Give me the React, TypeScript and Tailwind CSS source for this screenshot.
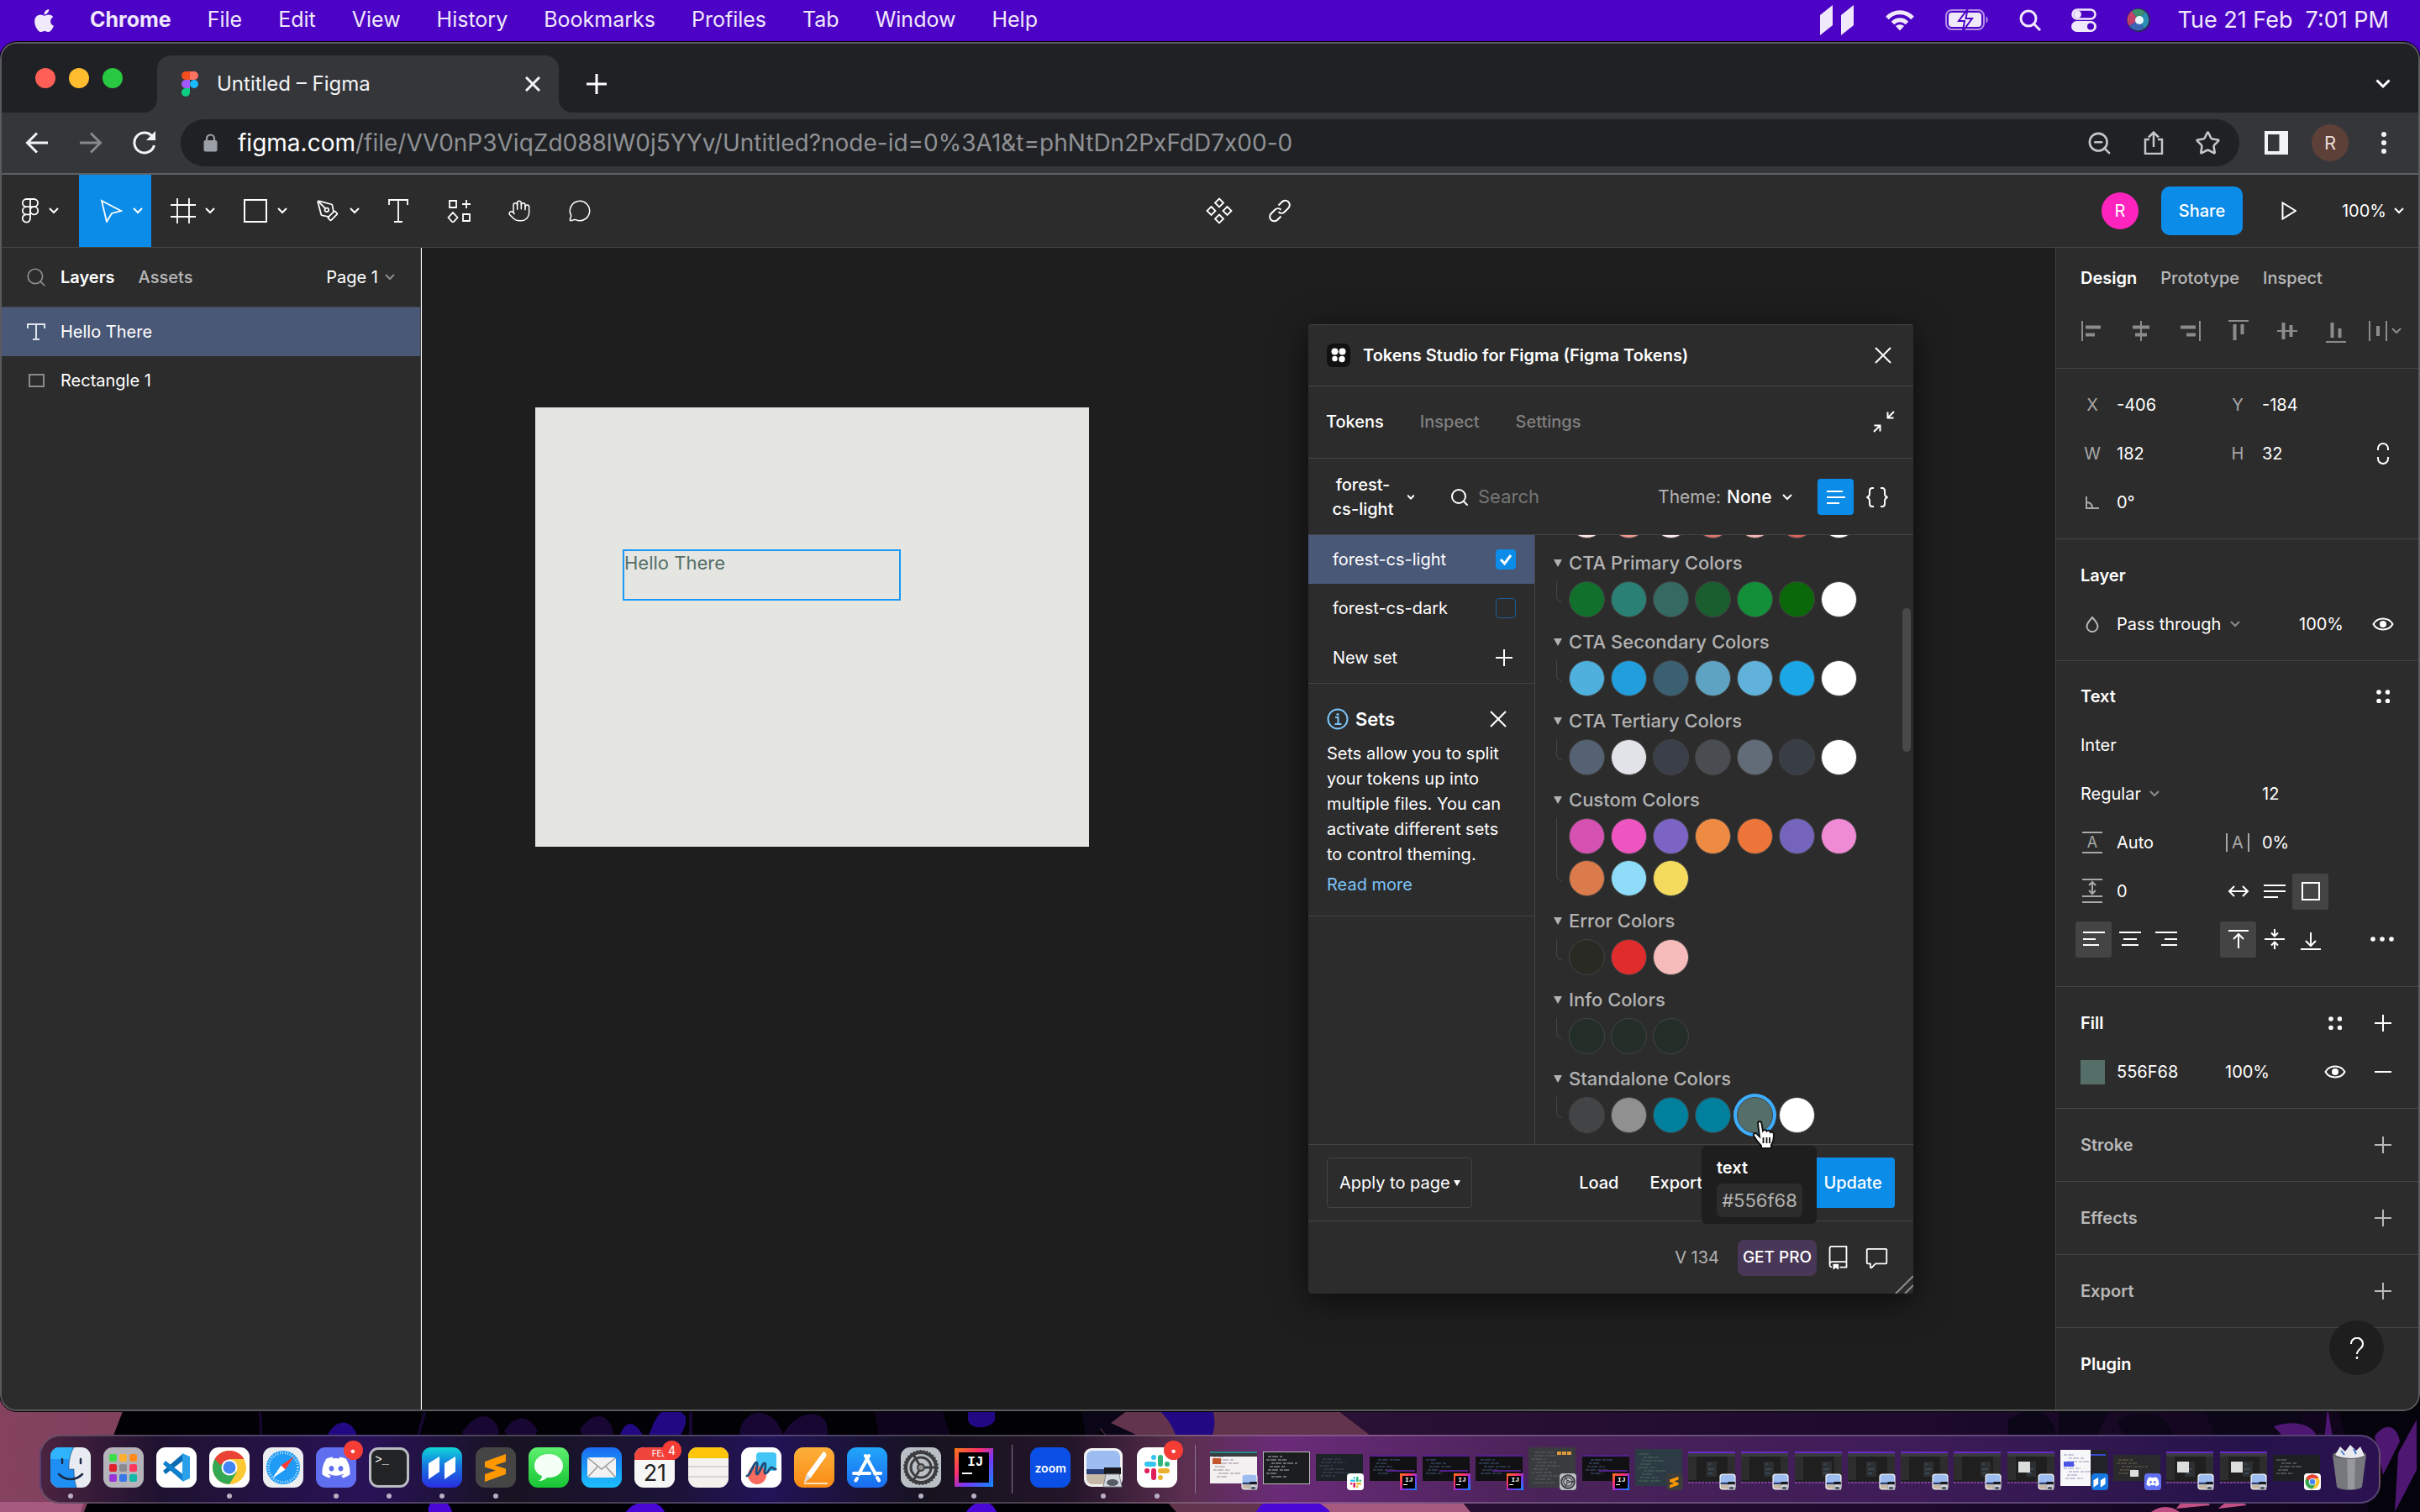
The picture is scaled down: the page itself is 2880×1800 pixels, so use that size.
import React from "react";
import { Hand, MessageCircle, PenTool, Search, Star, ZoomOut } from "lucide-react";
import { FaApple, FaDiscord } from "react-icons/fa";
import { GoComment, GoRepo } from "react-icons/go";

type Kids = { children?: React.ReactNode };

function Icon({ w = 28, h, sw = 2, className = "", children }: Kids & { w?: number; h?: number; sw?: number; className?: string }) {
  const hh = h ?? w;
  return (
    <svg width={w} height={hh} viewBox={`0 0 ${w} ${hh}`} fill="none" stroke="currentColor" strokeWidth={sw} className={`shrink-0 ${className}`} aria-hidden="true">
      {children}
    </svg>
  );
}

const Chevron = ({ className = "" }: { className?: string }) => (
  <Icon w={12} h={8} className={className}>
    <path d="M1 1l5 5 5-5" />
  </Icon>
);
const Plus = ({ className = "" }: { className?: string }) => (
  <Icon w={20} className={className}>
    <path d="M10 0v20M0 10h20" />
  </Icon>
);
const Cross = ({ w = 20, sw = 2 }: { w?: number; sw?: number }) => (
  <Icon w={w} sw={sw}>
    <path d={`M1 1L${w - 1} ${w - 1}M${w - 1} 1L1 ${w - 1}`} />
  </Icon>
);
const Eye = () => (
  <Icon w={26} h={16}>
    <path d="M1.500 8C4 3.500 8 1.500 13 1.500S22 3.500 24.500 8C22 12.500 18 14.500 13 14.500S4 12.500 1.500 8z" />
    <circle cx="13" cy="8" r="4" fill="currentColor" stroke="none" />
  </Icon>
);
const FourDots = () => (
  <Icon w={16}>
    <g fill="currentColor" stroke="none">
      <circle cx="3" cy="3" r="2.800" />
      <circle cx="13.500" cy="3" r="2.800" />
      <circle cx="3" cy="13.500" r="2.800" />
      <circle cx="13.500" cy="13.500" r="2.800" />
    </g>
  </Icon>
);

/* ---------- macOS menu bar ---------- */

const menus = ["File", "Edit", "View", "History", "Bookmarks", "Profiles", "Tab", "Window", "Help"];

function MenuBar() {
  return (
    <header className="flex h-12 items-center justify-between bg-[#4d03c5] pl-[37px] pr-[37px] text-[25px] text-[#f0e8fb]">
      <nav className="flex items-center gap-[43px]">
        <FaApple className="-mr-1 h-[31px] w-[31px]" aria-label="Apple" />
        <button className="font-bold">Chrome</button>
        {menus.map((m) => (
          <button key={m}>{m}</button>
        ))}
      </nav>
      <div className="flex items-center gap-9">
        <Icon w={42} h={38}>
          <path fill="currentColor" stroke="none" d="M1 13L16 1v24L1 37zM26 13L41 1v24L26 37z" />
        </Icon>
        <Icon w={36} h={26} sw={5}>
          <path d="M3 10.500C11 1.500 25 1.500 33 10.500" />
          <path d="M9.500 16.500c5-5 12-5 17 0" />
          <path d="M18 25.500l-5-5.500c3-2.500 7-2.500 10 0z" fill="currentColor" stroke="none" />
        </Icon>
        <Icon w={52} h={26}>
          <rect x="1" y="1" width="45" height="23" rx="7" opacity="0.6" />
          <rect x="4" y="4" width="39" height="17" rx="4" fill="currentColor" stroke="none" />
          <path d="M48.500 8.500c3 1 3 7 0 8z" fill="currentColor" stroke="none" opacity="0.6" />
          <path d="M26.500 0L16 14h7l-2 12 11-15h-7.500z" fill="currentColor" stroke="#4d03c5" strokeWidth="2" />
        </Icon>
        <Icon w={26} sw={3}>
          <circle cx="11" cy="11" r="9" />
          <path d="M17.500 17.500L25 25" />
        </Icon>
        <Icon w={30} h={28}>
          <rect x="1.500" y="1.500" width="27" height="11" rx="5.500" strokeWidth="2.500" />
          <circle cx="7.500" cy="7" r="3.500" fill="currentColor" />
          <rect x="0" y="15" width="30" height="13" rx="6.500" fill="currentColor" stroke="none" />
          <circle cx="23" cy="21.500" r="4" fill="#4d03c5" stroke="none" />
        </Icon>
        <svg width="28" height="28" viewBox="0 0 28 28" aria-hidden="true">
          <circle cx="14" cy="14" r="14" fill="#2b2a4e" />
          <path d="M14 14L6 3a13 13 0 00-3 18z" fill="#c2426c" />
          <path d="M14 14L6 3a13 13 0 0116 1z" fill="#3e8f70" />
          <path d="M14 14l8-10a13 13 0 01-1 20z" fill="#2b8fb4" />
          <path d="M14 14l7 10a13 13 0 01-18-3z" fill="#3a66b8" />
          <circle cx="15" cy="14" r="5" fill="#e6f6fb" />
        </svg>
        <time className="-ml-1 whitespace-pre text-[27px]">Tue 21 Feb  7:01 PM</time>
      </div>
    </header>
  );
}

/* ---------- Chrome ---------- */

function FigmaMark({ w = 20, h = 30 }: { w?: number; h?: number }) {
  return (
    <svg width={w} height={h} viewBox="0 0 20 30" aria-hidden="true">
      <path d="M5 0h5v10H5A5 5 0 015 0z" fill="#f24e1e" />
      <path d="M10 0h5a5 5 0 010 10h-5z" fill="#ff7262" />
      <path d="M5 10h5v10H5a5 5 0 010-10z" fill="#a259ff" />
      <circle cx="15" cy="15" r="5" fill="#1abcfe" />
      <path d="M5 20h5v5a5 5 0 11-5-5z" fill="#0acf83" />
    </svg>
  );
}

function TabStrip() {
  return (
    <div className="flex h-[82px] items-stretch bg-[#202124] pl-10">
      <div className="mr-[41px] flex items-center gap-4">
        <button aria-label="Close window" className="size-6 rounded-full bg-[#ff5f57]" />
        <button aria-label="Minimise window" className="size-6 rounded-full bg-[#febc2e]" />
        <button aria-label="Zoom window" className="size-6 rounded-full bg-[#28c840]" />
      </div>
      <div className="relative mt-[14px] flex w-[478px] items-center rounded-t-[16px] bg-[#35363a] pl-[29px] pr-[22px] text-[#f1f3f4]">
        <svg className="absolute -left-4 bottom-0" width="16" height="16" aria-hidden="true">
          <path d="M16 0v16H0A16 16 0 0016 0z" fill="#35363a" />
        </svg>
        <svg className="absolute -right-4 bottom-0" width="16" height="16" aria-hidden="true">
          <path d="M0 0v16h16A16 16 0 010 0z" fill="#35363a" />
        </svg>
        <FigmaMark />
        <span className="ml-[22px] flex-1 text-[24px]">Untitled – Figma</span>
        <button aria-label="Close tab">
          <Cross w={18} sw={3} />
        </button>
      </div>
      <button aria-label="New tab" className="ml-[33px] mt-[14px] text-white">
        <Icon w={24} sw={3}>
          <path d="M12 0v24M0 12h24" />
        </Icon>
      </button>
      <button aria-label="Search tabs" className="ml-auto mr-[33px] mt-[14px] text-white">
        <Icon w={18} h={12} sw={3}>
          <path d="M1.500 1.500L9 9l7.500-7.500" />
        </Icon>
      </button>
    </div>
  );
}

function AddressBar() {
  return (
    <div className="flex h-[74px] items-center border-b-2 border-[#5f6066] bg-[#35363a] pl-7 pr-[37px] text-[#f1f3f4]">
      <div className="mr-[29px] flex items-center gap-[36px]">
        <button aria-label="Back">
          <Icon sw={3}>
            <path d="M27 14H3M14 2.500L2.500 14 14 25.500" />
          </Icon>
        </button>
        <button aria-label="Forward" className="text-[#87888b]">
          <Icon sw={3}>
            <path d="M1 14h24M14 2.500L25.500 14 14 25.500" />
          </Icon>
        </button>
        <button aria-label="Reload">
          <Icon sw={3}>
            <path d="M24 7.500A12 12 0 1025.500 17" />
            <path d="M27 0v11H16z" fill="currentColor" stroke="none" />
          </Icon>
        </button>
      </div>
      <div className="flex h-14 min-w-0 flex-1 items-center rounded-full bg-[#202124] pl-[27px] pr-[22px]">
        <Icon w={17} h={22} className="text-[#9aa0a6]">
          <path d="M4 9V6a4.500 4.500 0 019 0v3" strokeWidth="2.200" />
          <rect x="0.500" y="8" width="16" height="13.500" rx="2" fill="currentColor" stroke="none" />
        </Icon>
        <p className="ml-[24px] min-w-0 flex-1 truncate text-[28px] text-[#8f9195] [font-feature-settings:'calt'_0]">
          <span className="text-white">figma.com</span>/file/VV0nP3ViqZd088lW0j5YYv/Untitled?node-id=0%3A1&amp;t=phNtDn2PxFdD7x00-0
        </p>
        <div className="flex items-center gap-[35px] text-[#c4c7ca]">
          <button aria-label="Zoom">
            <ZoomOut size={31} strokeWidth={2} />
          </button>
          <button aria-label="Share this page">
            <Icon sw={2.500}>
              <path d="M9 10H4v17h20V10h-5M14 19V2M8 7.500l6-6 6 6" />
            </Icon>
          </button>
          <button aria-label="Bookmark this tab">
            <Star size={31} strokeWidth={2} />
          </button>
        </div>
      </div>
      <div className="ml-[30px] flex items-center">
        <button aria-label="Side panel">
          <Icon w={28} sw={4}>
            <rect x="2" y="2" width="24" height="24" />
            <path d="M21 2v24" strokeWidth="7" />
          </Icon>
        </button>
        <button className="ml-7 size-11 rounded-full bg-[#5d4037] text-[22px] text-[#e8dcd8]">R</button>
        <button aria-label="Chrome menu" className="ml-[38px]">
          <Icon w={8} h={28}>
            <g fill="currentColor" stroke="none">
              <circle cx="4" cy="4" r="3" />
              <circle cx="4" cy="14" r="3" />
              <circle cx="4" cy="24" r="3" />
            </g>
          </Icon>
        </button>
      </div>
    </div>
  );
}

/* ---------- Figma toolbar ---------- */

function Tool({ label, active, menu, tight, children }: Kids & { label: string; active?: boolean; menu?: boolean; tight?: boolean }) {
  return (
    <button
      aria-label={label}
      className={`flex h-[86px] items-center ${menu ? "w-[86px] pl-6" : "w-[72px] justify-center"} ${tight ? "gap-1" : "gap-3"} ${active ? "bg-[#0c8ce9]" : ""}`}
    >
      <span className="flex w-7 justify-center">{children}</span>
      {menu && <Chevron />}
    </button>
  );
}

function FigmaToolbar() {
  return (
    <div className="grid grid-cols-[1fr_auto_1fr] border-b border-[#444444] bg-[#2c2c2c] text-white">
      <div className="flex">
        <div className="pr-[6px]">
          <Tool label="Main menu" menu tight>
            <Icon w={20} h={30} className="-ml-2">
              <path
                d="M10 1h4.500a4.600 4.600 0 010 9.200H10zM10 1H5.500a4.600 4.600 0 000 9.200H10zM10 10.200H5.500a4.600 4.600 0 000 9.200H10zM10 19.400H5.500a4.600 4.600 0 104.500 4.600z"
                strokeWidth="1.800"
              />
              <circle cx="14.600" cy="14.800" r="4.600" strokeWidth="1.800" />
            </Icon>
          </Tool>
        </div>
        <Tool label="Move" menu active>
          <Icon sw={1.800}>
            <path d="M3 2l23 12-11 3-6 10z" />
          </Icon>
        </Tool>
        <Tool label="Frame" menu>
          <Icon w={30} sw={1.800}>
            <path d="M8 0v30M22 0v30M0 8h30M0 22h30" />
          </Icon>
        </Tool>
        <Tool label="Rectangle" menu>
          <Icon w={28}>
            <rect x="1" y="1" width="26" height="26" />
          </Icon>
        </Tool>
        <Tool label="Pen" menu>
          <PenTool size={30} strokeWidth={1.500} />
        </Tool>
        <Tool label="Text">
          <Icon w={26} h={28} sw={1.800}>
            <path d="M2 7V1h22v6M13 1v26M8 27h10" />
          </Icon>
        </Tool>
        <Tool label="Resources">
          <Icon w={28} sw={1.800}>
            <path d="M3 2h8v8H3zM19 18h8v8h-8zM23 1v10M18 6h10M7 16l5.500 6L7 28l-5.500-6z" />
          </Icon>
        </Tool>
        <Tool label="Hand">
          <Hand size={36} strokeWidth={1.300} />
        </Tool>
        <Tool label="Comment">
          <MessageCircle size={34} strokeWidth={1.300} />
        </Tool>
      </div>
      <div className="flex pl-[94px]">
        <Tool label="Create component">
          <Icon w={32} sw={1.800}>
            <path d="M16 1.500l5 5-5 5-5-5zM16 20.500l5 5-5 5-5-5zM6.500 11l5 5-5 5-5-5zM25.500 11l5 5-5 5-5-5z" />
          </Icon>
        </Tool>
        <Tool label="Create link">
          <Icon w={28} sw={2}>
            <path d="M12.500 7.500l4-4a5 5 0 018 7l-5 5a5 5 0 01-7-.3" />
            <path d="M15.500 20.500l-4 4a5 5 0 01-8-7l5-5a5 5 0 017 .3" />
          </Icon>
        </Tool>
      </div>
      <div className="flex items-center justify-end pr-[17px] text-[20px]">
        <button className="size-11 rounded-full bg-[#ff24bd]">R</button>
        <button className="ml-[27px] h-[58px] w-[97px] rounded-[10px] bg-[#0c8ce9] font-medium">Share</button>
        <button aria-label="Present" className="ml-[46px]">
          <Icon w={18} h={22}>
            <path d="M1.500 1.500v19L17 11z" />
          </Icon>
        </button>
        <button className="ml-[54px] flex items-center gap-[9px]">
          100% <Chevron />
        </button>
      </div>
    </div>
  );
}

/* ---------- Left panel ---------- */

function LayersPanel() {
  return (
    <aside className="w-[499px] shrink-0 border-r border-[#444444] bg-[#2c2c2c] text-[20px] text-white">
      <div className="flex h-[71px] items-center border-b border-[#444444] pl-[28px] pr-[30px]">
        <Search size={26} strokeWidth={1.600} className="text-[#8c8c8c]" />
        <button className="ml-4 font-semibold">Layers</button>
        <button className="ml-7 font-medium text-[#b8b8b8]">Assets</button>
        <button className="ml-auto flex items-center gap-2">
          Page 1 <Chevron className="text-[#8c8c8c]" />
        </button>
      </div>
      <ul>
        <li className="flex h-[58px] items-center bg-[#4a5878] pl-[30px]">
          <Icon w={22} h={20} className="text-[#dfe3ec]">
            <path d="M1 6V1h20v5M11 1v18M7 19h8" />
          </Icon>
          <span className="ml-[18px]">Hello There</span>
        </li>
        <li className="flex h-[58px] items-center pl-[30px]">
          <Icon w={22} h={16} className="text-[#8c8c8c]">
            <rect x="3" y="1" width="17" height="14" />
          </Icon>
          <span className="ml-[18px]">Rectangle 1</span>
        </li>
      </ul>
    </aside>
  );
}

/* ---------- Tokens plugin ---------- */

const groups: { name: string; colors: string[] }[] = [
  { name: "CTA Primary Colors", colors: ["#11702b", "#2a8074", "#356a62", "#1a5d2e", "#138f3a", "#0a680a", "#ffffff"] },
  { name: "CTA Secondary Colors", colors: ["#4fb0de", "#219edb", "#3b6072", "#5fa3c3", "#60b2db", "#1ba6e6", "#ffffff"] },
  { name: "CTA Tertiary Colors", colors: ["#556274", "#e2e3e8", "#3b3f49", "#494c51", "#626c79", "#383d46", "#ffffff"] },
  { name: "Custom Colors", colors: ["#d552b2", "#ee55c1", "#7c64c5", "#ee8b43", "#ee7539", "#7564bb", "#ef8ad5", "#db7a4a", "#8edcf9", "#f4db5e"] },
  { name: "Error Colors", colors: ["#292a23", "#e02c2d", "#f5bcbb"] },
  { name: "Info Colors", colors: ["#242e29", "#242e29", "#242e29"] },
  { name: "Standalone Colors", colors: ["#434446", "#909090", "#00809d", "#00809d", "#556f68", "#ffffff"] },
];
const hidden = ["#fde3e1", "#ee9891", "#feeceb", "#d97670", "#f4b7b3", "#d6625e", "#ffffff"];

function Swatch({ color, selected }: { color: string; selected?: boolean }) {
  return (
    <button
      aria-label={color}
      className={`size-[43px] shrink-0 rounded-full border border-[#444444] ${selected ? "ring-4 ring-[#3daeff]" : ""}`}
      style={{ backgroundColor: color }}
    />
  );
}

function TokenGroups() {
  return (
    <div className="relative min-w-0 flex-1 overflow-hidden pl-[22px]">
      <div className="flex h-[4px] items-end gap-[7px] overflow-hidden pl-[18px]">
        {hidden.map((c) => (
          <Swatch key={c} color={c} />
        ))}
      </div>
      {groups.map((g) => (
        <section key={g.name} className="pt-[17px]">
          <h3 className="flex h-6 items-center gap-2 text-[22px] font-medium text-[#b3b3b3]">
            <svg width="10" height="9" aria-hidden="true">
              <path d="M0 0h10L5 9z" fill="currentColor" />
            </svg>
            {g.name}
          </h3>
          <div className="mt-[10px] flex pl-[3px]">
            <span className="mb-[18px] mr-2 w-[7px] rounded-bl-[7px] border-b border-l border-[#444444]" />
            <div className="flex w-[343px] flex-wrap gap-[7px]">
              {g.colors.map((c, i) => (
                <Swatch key={i} color={c} selected={c === "#556f68"} />
              ))}
            </div>
          </div>
        </section>
      ))}
      <div className="absolute right-[3px] top-[87px] h-[171px] w-[10px] rounded-full bg-[#494949]" />
    </div>
  );
}

function TokenSets() {
  return (
    <div className="w-[270px] shrink-0 border-r border-[#444444] text-[20px] text-white">
      <label className="flex h-[58px] items-center justify-between bg-[#4a5878] pl-[29px] pr-[22px]">
        forest-cs-light
        <span className="relative flex">
          <input type="checkbox" defaultChecked className="size-6 appearance-none rounded-[4px] bg-[#0c8ce9]" />
          <Icon w={24} sw={3} className="pointer-events-none absolute inset-0">
            <path d="M6 12l4.500 5L18 7" />
          </Icon>
        </span>
      </label>
      <label className="flex h-[58px] items-center justify-between pl-[29px] pr-[22px]">
        forest-cs-dark
        <input type="checkbox" className="size-6 appearance-none rounded-[4px] border border-[#1f5d94]" />
      </label>
      <button className="flex h-[61px] w-full items-center justify-between border-b border-[#444444] pl-[29px] pr-[26px]">
        New set
        <Plus />
      </button>
      <div className="border-b border-[#444444] px-[22px] pb-[22px] pt-[28px]">
        <div className="flex items-center">
          <Icon w={26} className="text-[#7cc4f8]">
            <circle cx="13" cy="13" r="11.500" />
            <path d="M10 11h3.500v8M9.500 19h8" />
            <circle cx="13" cy="7.500" r="1.600" fill="currentColor" stroke="none" />
          </Icon>
          <h3 className="ml-2 text-[22px] font-semibold leading-7">Sets</h3>
          <button aria-label="Dismiss" className="ml-auto mr-[11px]">
            <Cross />
          </button>
        </div>
        <p className="mt-3 leading-[30px]">Sets allow you to split your tokens up into multiple files. You can activate different sets to control theming.</p>
        <a href="#sets" className="mt-[6px] block leading-[30px] text-[#7cc4f8]">
          Read more
        </a>
      </div>
    </div>
  );
}

function TokensPlugin() {
  return (
    <section className="absolute left-[1055px] top-[91px] flex h-[1154px] w-[720px] flex-col rounded-[4px] border-t border-[#444444] bg-[#2c2c2c] text-[20px] text-white shadow-[0_8px_40px_rgba(0,0,0,0.6)]">
      <header className="flex h-[73px] items-center border-b border-[#444444] px-[22px]">
        <span className="flex size-7 items-center justify-center rounded-[7px] bg-[#111111]">
          <Icon w={18}>
            <g fill="currentColor" stroke="none">
              <circle cx="4.500" cy="4.500" r="4" />
              <circle cx="13.500" cy="4.500" r="4" />
              <circle cx="4.500" cy="13" r="3.200" />
              <circle cx="13" cy="13.500" r="3.700" />
            </g>
          </Icon>
        </span>
        <h2 className="ml-[15px] flex-1 font-semibold">Tokens Studio for Figma (Figma Tokens)</h2>
        <button aria-label="Close plugin" className="mr-1">
          <Cross />
        </button>
      </header>
      <nav className="flex h-[86px] items-center gap-[43px] border-b border-[#444444] pb-[2px] pl-[21px] pr-[22px] font-medium">
        <button>Tokens</button>
        <button className="text-[#808080]">Inspect</button>
        <button className="text-[#808080]">Settings</button>
        <button aria-label="Collapse" className="ml-auto">
          <Icon w={26}>
            <path d="M25 1l-7 7M17.500 1.500V8.500h7M1 25l7-7M8.500 24.500V17.500h-7" />
          </Icon>
        </button>
      </nav>
      <div className="flex h-[91px] items-center border-b border-[#444444] pl-7 pr-[29px] pt-px">
        <button aria-haspopup="menu" className="flex items-center gap-[16px] font-medium leading-[29px]">
          <span className="w-[74px]">forest-cs-light</span>
          <Icon w={8} h={6}>
            <path d="M0 .500l4 4 4-4" />
          </Icon>
        </button>
        <label className="ml-[42px] flex items-center gap-[10px]">
          <Search size={24} strokeWidth={2} />
          <input aria-label="Search" placeholder="Search" className="w-[190px] bg-transparent text-[22px] outline-none placeholder:text-[#757575]" />
        </label>
        <label className="ml-auto flex items-center text-[21px] text-[#b3b3b3]">
          Theme:
          <select className="ml-[7px] appearance-none bg-transparent font-medium text-white">
            <option>None</option>
          </select>
          <Chevron className="ml-3 text-white" />
        </label>
        <button aria-label="List view" className="ml-[30px] flex size-[43px] items-center justify-center rounded-[4px] bg-[#0c8ce9]">
          <Icon w={24} h={18}>
            <path d="M1 2h19M1 9h22M1 16h15" />
          </Icon>
        </button>
        <button aria-label="JSON view" className="ml-[14px]">
          <Icon w={28} h={26}>
            <path d="M10 2H8C5.500 2 5 3.500 5 5.500v3C5 11 4 12.500 1.500 13 4 13.500 5 15 5 17.500v3c0 2 .5 3.500 3 3.500h2M18 2h2c2.500 0 3 1.500 3 3.500v3c0 2.500 1 4 3.500 4.500-2.500.5-3.500 2-3.500 4.500v3c0 2-.5 3.500-3 3.500h-2" />
          </Icon>
        </button>
      </div>
      <div className="flex min-h-0 flex-1">
        <TokenSets />
        <TokenGroups />
      </div>
      <div className="relative flex h-[92px] items-center border-y border-[#444444] px-[22px]">
        <button aria-haspopup="menu" className="flex h-[60px] w-[173px] items-center gap-1 rounded-[4px] border border-[#444444] pl-[14px]">
          Apply to page
          <svg width="8" height="7" aria-hidden="true">
            <path d="M0 0h8L4 7z" fill="currentColor" />
          </svg>
        </button>
        <button className="ml-auto mr-[37px] font-medium">Load</button>
        <button className="mr-[129px] font-medium">Export</button>
        <button className="h-[60px] w-[100px] rounded-[4px] bg-[#0c8ce9] font-medium">Update</button>
        <div role="tooltip" className="absolute right-[115px] top-px w-[137px] rounded-[6px] bg-[#1e1e1e] pb-2 pl-[18px] pt-3">
          <p className="font-semibold leading-7">text</p>
          <code className="mt-[5px] block w-[102px] rounded-[6px] bg-[#2c2c2c] text-center font-[Inter] text-[22px] leading-10 text-[#b3b3b3]">#556f68</code>
        </div>
        <svg className="absolute -top-[30px] right-[163px]" width="30" height="36" viewBox="0 0 30 36" aria-hidden="true">
          <path
            d="M8 4.500C8 1 12 1 12.500 4.500L14 13c1-1.500 4-1.500 4.500.5 1.500-1.500 4-.5 4.500 1.500 2-1 4 0 4 3 0 6-1 9-3 12v4H12v-3C8 27 5 23 3 19c-1-3 2.500-4 4.500-1.500L10 20z"
            fill="#fff"
            stroke="#111"
            strokeWidth="2"
          />
          <path d="M14.500 21v7M18.500 21v7M22 21v7" stroke="#111" strokeWidth="1.800" />
        </svg>
      </div>
      <footer className="relative flex h-[86px] items-center justify-end pr-[29px]">
        <span className="text-[#b3b3b3]">V 134</span>
        <button className="ml-[22px] h-[43px] w-[94px] rounded-[8px] bg-[#483757] text-[19px] font-medium">GET PRO</button>
        <a href="#docs" aria-label="Documentation" className="ml-[11px]">
          <GoRepo size={29} />
        </a>
        <a href="#feedback" aria-label="Feedback" className="ml-[17px]">
          <GoComment size={29} />
        </a>
        <Icon w={22} className="absolute bottom-0 right-0 text-[#8c8c8c]">
          <path d="M1 22L22 1M12 22l10-10" />
        </Icon>
      </footer>
    </section>
  );
}

/* ---------- Canvas ---------- */

function Canvas() {
  return (
    <main className="relative min-w-0 flex-1 border-l border-white bg-[#1e1e1e]">
      <div className="absolute left-[135px] top-[190px] h-[523px] w-[659px] bg-[#e5e6e1]">
        <div className="absolute left-[104px] top-[169px] h-[61px] w-[331px] border-2 border-[#1a98f5] text-[22px] leading-7 text-[#556f68]">Hello There</div>
      </div>
      <TokensPlugin />
    </main>
  );
}

/* ---------- Right panel ---------- */

const Section = ({ children }: Kids) => <section className="border-b border-[#444444] py-[14px]">{children}</section>;
const Row = ({ children }: Kids) => <div className="flex h-[58px] items-center pl-[29px] pr-[29px]">{children}</div>;

function Field({ id, value, label, name, wide }: { id: string; value: string; label: React.ReactNode; name?: string; wide?: boolean }) {
  return (
    <div className={`flex items-center ${wide ? "w-[173px]" : "w-[130px]"}`}>
      <label htmlFor={id} aria-label={name} className="flex w-[28px] justify-center text-[#a8a8a8]">
        {label}
      </label>
      <input id={id} defaultValue={value} className="ml-[15px] w-[85px] bg-transparent outline-none" />
    </div>
  );
}

function Closed({ title }: { title: string }) {
  return (
    <Section>
      <Row>
        <h3 className="flex-1 font-semibold text-[#b8b8b8]">{title}</h3>
        <button aria-label={`Add ${title.toLowerCase()}`} className="mr-[3px] text-[#b8b8b8]">
          <Plus />
        </button>
      </Row>
    </Section>
  );
}

function Toggle({ label, on, children }: Kids & { label: string; on?: boolean }) {
  return (
    <button aria-label={label} className={`flex size-[43px] items-center justify-center rounded-[3px] ${on ? "bg-[#444444]" : ""}`}>
      {children}
    </button>
  );
}

function DesignPanel() {
  return (
    <aside className="relative w-[432px] shrink-0 border-l border-[#444444] bg-[#2c2c2c] text-[20px] text-white">
      <nav className="flex h-[71px] items-center gap-7 pl-[29px]">
        <button className="font-semibold">Design</button>
        <button className="font-medium text-[#b8b8b8]">Prototype</button>
        <button className="font-medium text-[#b8b8b8]">Inspect</button>
      </nav>
      <div className="flex h-[73px] items-center border-b border-[#444444] pb-4 pl-[14px] text-[#8c8c8c]">
        {[
          ["Align left", "M2 2v24", "M6 9.500h18M6 18.500h11"],
          ["Align horizontal centers", "M14 2v24", "M4 9.500h20M7 18.500h14"],
          ["Align right", "M26 2v24", "M3 9.500h18M10 18.500h11"],
          ["Align top", "M2 2h24", "M9.500 6v19M18.500 6v12"],
          ["Align vertical centers", "M2 14h24", "M9.500 4v20M18.500 7v14"],
          ["Align bottom", "M2 27h24", "M9.500 4v18M18.500 11v11"],
        ].map(([name, thin, thick]) => (
          <button key={name} aria-label={name} className="flex w-[58px] justify-center">
            <Icon>
              <path d={thin} strokeWidth="2" />
              <path d={thick} strokeWidth="4" />
            </Icon>
          </button>
        ))}
        <button aria-label="Distribute" className="ml-[9px] flex items-center gap-1">
          <Icon w={24} h={26}>
            <path d="M2 1v24M22 1v24" />
            <path d="M12 7v12" strokeWidth="4" />
          </Icon>
          <Chevron />
        </button>
      </div>
      <Section>
        <Row>
          <Field id="x" label="X" value="-406" wide />
          <Field id="y" label="Y" value="-184" />
        </Row>
        <Row>
          <Field id="w" label="W" value="182" wide />
          <Field id="h" label="H" value="32" />
          <button aria-label="Constrain proportions" className="ml-auto mr-[6px]">
            <Icon w={14} h={26}>
              <path d="M1 9V7a6 6 0 0112 0v2M1 17v2a6 6 0 0012 0v-2" />
            </Icon>
          </button>
        </Row>
        <Row>
          <Field
            id="angle"
            name="Rotation"
            value="0°"
            label={
              <Icon w={16}>
                <path d="M1 1v14h15M1 8c5 0 7 3 7 7" />
              </Icon>
            }
          />
        </Row>
      </Section>
      <Section>
        <Row>
          <h3 className="font-semibold">Layer</h3>
        </Row>
        <Row>
          <span className="flex w-7 justify-center text-[#b8b8b8]">
            <Icon w={16} h={20}>
              <path d="M8 2C4 6.500 1.500 9 1.500 12.500a6.500 6.500 0 0013 0C14.500 9 12 6.500 8 2z" />
            </Icon>
          </span>
          <select aria-label="Blend mode" className="ml-[15px] appearance-none bg-transparent">
            <option>Pass through</option>
          </select>
          <Chevron className="ml-[10px] text-[#8c8c8c]" />
          <input aria-label="Layer opacity" defaultValue="100%" className="ml-auto mr-[25px] w-[62px] bg-transparent outline-none" />
          <button aria-label="Toggle visibility">
            <Eye />
          </button>
        </Row>
      </Section>
      <section className="border-b border-[#444444] pb-[28px] pt-[13px]">
        <Row>
          <h3 className="flex-1 font-semibold">Text</h3>
          <button aria-label="Text styles" className="mr-[5px]">
            <FourDots />
          </button>
        </Row>
        <Row>
          <input aria-label="Font family" defaultValue="Inter" className="w-full bg-transparent outline-none" />
        </Row>
        <Row>
          <div className="flex w-[216px] items-center">
            <select aria-label="Font style" className="appearance-none bg-transparent">
              <option>Regular</option>
            </select>
            <Chevron className="ml-[10px] text-[#8c8c8c]" />
          </div>
          <input aria-label="Font size" defaultValue="12" className="w-20 bg-transparent outline-none" />
        </Row>
        <Row>
          <Field id="lh" name="Line height" value="Auto" wide label={<span className="w-6 border-y-2 border-[#a8a8a8] text-center text-[18px] leading-[22px]">A</span>} />
          <Field id="ls" name="Letter spacing" value="0%" label={<span className="w-[28px] shrink-0 border-x-2 border-[#a8a8a8] text-center text-[20px] leading-[22px]">A</span>} />
        </Row>
        <Row>
          <Field
            id="ps"
            name="Paragraph spacing"
            value="0"
            label={
              <Icon w={24} h={30}>
                <path d="M0 1h24M0 21h24M0 28h24M12 5v12M8 8l4-4 4 4M8 14l4 4 4-4" />
              </Icon>
            }
          />
          <div className="ml-[36px] flex">
            <Toggle label="Auto width">
              <Icon w={26} h={14}>
                <path d="M2 7h22M8 1L2 7l6 6M18 1l6 6-6 6" />
              </Icon>
            </Toggle>
            <Toggle label="Auto height">
              <Icon w={26} h={18}>
                <path d="M0 2h26M0 9h26M0 16h17" />
              </Icon>
            </Toggle>
            <Toggle label="Fixed size" on>
              <Icon w={22}>
                <rect x="1" y="1" width="20" height="20" />
              </Icon>
            </Toggle>
          </div>
        </Row>
        <div className="flex h-[56px] items-center pl-[23px] pr-[29px]">
          <Toggle label="Align text left" on>
            <Icon w={26} h={18}>
              <path d="M0 1h26M0 9h15M0 16h19" />
            </Icon>
          </Toggle>
          <Toggle label="Align text center">
            <Icon w={26} h={18}>
              <path d="M0 1h26M5 9h16M3 16h20" />
            </Icon>
          </Toggle>
          <Toggle label="Align text right">
            <Icon w={26} h={18}>
              <path d="M0 1h26M11 9h15M7 16h19" />
            </Icon>
          </Toggle>
          <div className="ml-[43px] flex">
            <Toggle label="Align text top" on>
              <Icon w={26}>
                <path d="M1 3h24M13 24V8M7 13l6-6 6 6" />
              </Icon>
            </Toggle>
            <Toggle label="Align text middle">
              <Icon w={26}>
                <path d="M1 13h24M13 1v8M9 5.500l4 4 4-4M13 25v-8M9 20.500l4-4 4 4" />
              </Icon>
            </Toggle>
            <Toggle label="Align text bottom">
              <Icon w={26}>
                <path d="M1 25h24M13 5v15M7 15l6 6 6-6" />
              </Icon>
            </Toggle>
          </div>
          <button aria-label="Type settings" className="ml-auto">
            <Icon w={28} h={6}>
              <g fill="currentColor" stroke="none">
                <circle cx="3" cy="3" r="2.800" />
                <circle cx="14" cy="3" r="2.800" />
                <circle cx="25" cy="3" r="2.800" />
              </g>
            </Icon>
          </button>
        </div>
      </section>
      <Section>
        <Row>
          <h3 className="flex-1 font-semibold">Fill</h3>
          <button aria-label="Fill styles" className="mr-[39px]">
            <FourDots />
          </button>
          <button aria-label="Add fill" className="mr-[3px]">
            <Plus />
          </button>
        </Row>
        <Row>
          <button aria-label="Fill colour" className="size-[29px] bg-[#556f68]" />
          <input aria-label="Fill hex" defaultValue="556F68" className="ml-[14px] w-[129px] bg-transparent outline-none" />
          <input aria-label="Fill opacity" defaultValue="100%" className="w-[70px] bg-transparent outline-none" />
          <button aria-label="Toggle fill" className="ml-auto mr-[34px]">
            <Eye />
          </button>
          <button aria-label="Remove fill" className="mr-[3px]">
            <Icon w={20}>
              <path d="M0 10h20" />
            </Icon>
          </button>
        </Row>
      </Section>
      <Closed title="Stroke" />
      <Closed title="Effects" />
      <Closed title="Export" />
      <div className="pt-[14px]">
        <Row>
          <h3 className="font-semibold">Plugin</h3>
        </Row>
      </div>
      <button aria-label="Help" className="absolute bottom-[41px] right-[41px] flex size-[65px] items-center justify-center rounded-full bg-[#1e1e1e]">
        <Icon w={18} h={26}>
          <path d="M2 8a7 7 0 1111 5.500C10 16 9 17 9 20" />
          <circle cx="9" cy="24.500" r="1.400" fill="currentColor" stroke="none" />
        </Icon>
      </button>
    </aside>
  );
}

/* ---------- Desktop and dock ---------- */

function Wallpaper() {
  return (
    <svg className="absolute inset-x-0 bottom-0 h-[220px] w-full" viewBox="0 0 2880 220" preserveAspectRatio="none" aria-hidden="true">
      <defs>
        <linearGradient id="dusk" x1="0" x2="1">
          <stop offset="0" stopColor="#84425f" />
          <stop offset="0.540" stopColor="#5c2f48" />
          <stop offset="0.550" stopColor="#2a1136" />
          <stop offset="0.800" stopColor="#1d0a2c" />
          <stop offset="1" stopColor="#0d0418" />
        </linearGradient>
      </defs>
      <rect width="2880" height="220" fill="url(#dusk)" />
      <path d="M150 90L100 220H1420L1330 130 1270 90z" fill="#020106" />
      <path d="M1280 90h300l60 46 80 84H1400z" fill="#62354c" />
      <path d="M0 208h100l-4 12H0zM1510 208h230l10 12H1500z" fill="#a65a80" />
      <g fill="#230884">
        <path d="M390 128c10-20 30-20 36 4l6 18h-30zM432 150c4-16 16-24 24-20-2 16-10 24-24 20zM738 128c10-26 24-8 32 10 8-34 24-56 46-32 2 24-20 38-46 50z" />
        <path d="M1152 95h32v16c-6 10-28 12-32 0zM1376 95h66c6 16 4 32-6 48l-34 6c0-24-10-38-26-54z" />
        <path d="M510 220c-4-16 24-20 28 0zM745 220c10-16 40-16 46 0zM1150 220c10-16 30-16 36 0zM1495 220c10-24 70-24 88 0z" fill="#4a08d6" />
      </g>
      <g fill="#190733">
        <path d="M550 125c20-30 40-20 44 0-14 24-34 24-44 0zM600 124c14-22 30-20 40 0-14 20-28 16-40 0zM690 122c16-24 36-20 40 4-14 16-34 14-40-4zM880 130c0-34 40-40 52-2 18-36 60-30 52 2-20 24-84 24-104 0z" />
        <path d="M1040 95h80l20 60h-90z" opacity="0.500" />
        <path d="M308 95h3l2 60h-3zM505 95h4l-14 50h-3zM820 95h4v60h-4z" />
      </g>
      <path d="M1286 96h60l-24 18 30 14c-10 12-30 12-42-8l-14 30z" fill="#0a0618" />
      <g fill="#0b0618">
        <path d="M2390 110c30-20 60-10 56 30-16 20-60 20-56-30zM2450 100c30-16 50-10 60 0l-20 40-40 10zM2520 110c30-14 60-10 66 20-20 20-60 14-66-20zM2620 90h120v70h-90z" />
        <path d="M2780 90h100v130h-60z" fill="#05030c" />
      </g>
      <g fill="#4d1772">
        <path d="M2706 118c30-10 60 0 52 32-24 0-36-14-52-32zM2770 95l10 60h-16zM2826 130c14-20 28-10 30 6l-20 40zM2854 150l22-40v60l-26 50z" />
      </g>
      <path d="M2560 220c10-8 24-8 34 0zM2590 216c10-16 30-20 40-4zM2640 216c10-10 20-14 34-4z" fill="#c04f84" />
    </svg>
  );
}

const Tile = ({ className = "", children }: Kids & { className?: string }) => (
  <span className={`flex size-[48px] items-center justify-center overflow-hidden rounded-[11px] ${className}`}>{children}</span>
);

const ChromeArt = ({ s = 42 }: { s?: number }) => (
  <svg width={s} height={s} viewBox="0 0 42 42" aria-hidden="true">
    <circle cx="21" cy="21" r="20" fill="#fcc934" />
    <path d="M3.700 11a20 20 0 0017.300 30L30 26 21 21z" fill="#34a853" />
    <path d="M3.700 11A20 20 0 0138.300 11H21a10 10 0 00-9 5z" fill="#ea4335" />
    <path d="M3.700 11L12 26l9-5-5-10z" fill="#34a853" />
    <path d="M3.700 11A20 20 0 0138.300 11H21L10 18z" fill="#ea4335" />
    <circle cx="21" cy="21" r="9.500" fill="#fff" />
    <circle cx="21" cy="21" r="7.500" fill="#4285f4" />
  </svg>
);
const SlackArt = ({ s = 34 }: { s?: number }) => (
  <svg width={s} height={s} viewBox="0 0 34 34" strokeWidth="6" strokeLinecap="round" aria-hidden="true">
    <path d="M13 5v.1M5 13h8" stroke="#36c5f0" />
    <path d="M21 5v8M29 13h-.1" stroke="#2eb67d" />
    <path d="M21 21h8M21 29v-.1" stroke="#ecb22e" />
    <path d="M13 21v8M5 21h.1" stroke="#e01e5a" />
  </svg>
);
const IdeaArt = ({ small }: { small?: boolean }) => (
  <span className={`flex items-center justify-center bg-[linear-gradient(135deg,#f97a12,#fe2d6f_35%,#7a35f5_60%,#0b8cff)] ${small ? "size-5" : "size-[46px]"}`}>
    <span className={`flex flex-col bg-black font-mono font-bold text-white ${small ? "size-[15px] pl-px text-[8px] leading-[10px]" : "size-9 pl-1 text-[16px] leading-[24px]"}`}>
      IJ
      <i className={`bg-white ${small ? "h-px w-[5px]" : "h-[2px] w-3"}`} />
    </span>
  </span>
);
const SublimeArt = ({ s = 36 }: { s?: number }) => (
  <svg width={s} height={s} viewBox="0 0 36 36" aria-hidden="true">
    <path d="M5 11L30 2v9L17 15.500l13 4V26L5 35v-9l13-4.500-13-4z" fill="#ff9800" />
  </svg>
);
const SlashArt = ({ s = 34 }: { s?: number }) => (
  <svg width={s} height={s} viewBox="0 0 34 34" aria-hidden="true">
    <path d="M1 12L14 4v18L1 31zM20 12L33 4v18L20 31z" fill="#fff" />
  </svg>
);
const PreviewArt = ({ s = 48 }: { s?: number }) => (
  <svg width={s} height={s} viewBox="0 0 48 48" aria-hidden="true">
    <rect x="1" y="1" width="46" height="46" rx="9" fill="#f2f2f4" />
    <path d="M4 11a7 7 0 017-7h26a7 7 0 017 7v17H4z" fill="#9dbdf0" />
    <path d="M4 26h40v6H4z" fill="#2b4078" />
    <path d="M4 32h40v5a7 7 0 01-7 7H11a7 7 0 01-7-7z" fill="#c5b8a6" />
    <path d="M25 24h20v8H25z" fill="#17181c" rx="2" />
    <path d="M27 32h16l3 15H24z" fill="#d4d9e0" stroke="#85888f" />
    <ellipse cx="35" cy="42" rx="7" ry="4" fill="#555c66" />
  </svg>
);
const GearArt = ({ s = 42 }: { s?: number }) => (
  <svg width={s} height={s} viewBox="0 0 42 42" fill="none" stroke="#3d3d3f" aria-hidden="true">
    <circle cx="21" cy="21" r="18" strokeWidth="4" />
    <circle cx="21" cy="21" r="20" strokeWidth="2" strokeDasharray="2 2" />
    <circle cx="21" cy="21" r="12" strokeWidth="3" />
    <path d="M21 21h17M21 21L12.500 6.500M21 21l-8.500 14.500" strokeWidth="3" />
    <circle cx="21" cy="21" r="4" fill="#8e8e90" strokeWidth="2" />
  </svg>
);

const apps: { name: string; dot?: boolean; badge?: string; art: React.ReactNode }[] = [
  {
    name: "Finder",
    dot: true,
    art: (
      <Tile className="bg-[#e8ecf2]">
        <svg width="48" height="48" aria-hidden="true">
          <path d="M0 0h28c-5 8-6 17-6 26h6c0 8 1 15 3 22H0z" fill="#1e90f5" />
          <path d="M0 0h28c-3 5-4 9-5 14H0z" fill="#2fb4fb" />
          <path d="M14 14v5M36 14v5M10 32c8 8 20 8 28 0" stroke="#1b2b45" strokeWidth="2.500" fill="none" strokeLinecap="round" />
          <path d="M28 0c-5 8-6 17-6 26h6c0 8 1 15 3 22" stroke="#1b2b45" strokeWidth="1" fill="none" opacity="0.500" />
        </svg>
      </Tile>
    ),
  },
  {
    name: "Launchpad",
    art: (
      <Tile className="bg-[#b4b4ba]">
        <span className="grid grid-cols-3 gap-[3px]">
          <i className="size-[9px] rounded-[2px] bg-[#3ddc4a]" />
          <i className="size-[9px] rounded-[2px] bg-[#ffb02e]" />
          <i className="size-[9px] rounded-[2px] bg-[#ff8a1e]" />
          <i className="size-[9px] rounded-[2px] bg-[#e0222c]" />
          <i className="size-[9px] rounded-[2px] bg-[#8a8a90]" />
          <i className="size-[9px] rounded-[2px] bg-[#ff3860]" />
          <i className="size-[9px] rounded-[2px] bg-[#9b35d8]" />
          <i className="size-[9px] rounded-[2px] bg-[#3a78e8]" />
          <i className="size-[9px] rounded-[2px] bg-[#12b8a8]" />
        </span>
      </Tile>
    ),
  },
  {
    name: "Visual Studio Code",
    art: (
      <Tile className="bg-white">
        <svg width="36" height="36" viewBox="0 0 36 36" aria-hidden="true">
          <path d="M25 2L2 22l3 4L27 9z" fill="#0a6db3" />
          <path d="M25 34L2 14l3-4 22 17z" fill="#1180cc" />
          <path d="M25 1l9 4v26l-9 4z" fill="#2aa0ea" />
        </svg>
      </Tile>
    ),
  },
  { name: "Chrome", dot: true, art: <Tile className="bg-white"><ChromeArt /></Tile> },
  {
    name: "Safari",
    art: (
      <Tile className="bg-[#eceef0]">
        <svg width="42" height="42" viewBox="0 0 42 42" aria-hidden="true">
          <circle cx="21" cy="21" r="20" fill="#1f9bf5" />
          <circle cx="21" cy="21" r="17.500" fill="none" stroke="#bfe3ff" strokeWidth="3" strokeDasharray="1 2" />
          <path d="M34 8L23.500 23.500l-5-5z" fill="#ff3b30" />
          <path d="M8 34l10.500-15.500 5 5z" fill="#fff" />
        </svg>
      </Tile>
    ),
  },
  { name: "Discord", dot: true, badge: "•", art: <Tile className="bg-[#5f6ff0]"><FaDiscord className="size-9 text-white" /></Tile> },
  {
    name: "Terminal",
    dot: true,
    art: <Tile className="items-start! justify-start! border-[3px] border-[#b8bcc0] bg-[#232425] pl-1 pt-1 font-mono text-[14px] leading-4 text-white">&gt;_</Tile>,
  },
  { name: "Notes sync", dot: true, art: <Tile className="bg-[linear-gradient(#10d6d8,#1678e0_45%,#2a2ee0)]"><SlashArt /></Tile> },
  { name: "Sublime Text", dot: true, art: <Tile className="bg-[#454545]"><SublimeArt /></Tile> },
  {
    name: "Messages",
    art: (
      <Tile className="bg-[linear-gradient(#5ff070,#18c434)]">
        <svg width="38" height="34" aria-hidden="true">
          <path d="M19 1C9 1 2 7 2 15c0 6 4 10 9 12 0 3-2 5-4 6 5 0 8-2 10-4h2c10 0 17-6 17-14S29 1 19 1z" fill="#f4fff5" />
        </svg>
      </Tile>
    ),
  },
  {
    name: "Mail",
    art: (
      <Tile className="bg-[linear-gradient(#1b6cf2,#1cc0fc)]">
        <svg width="36" height="26" aria-hidden="true">
          <rect x="1" y="1" width="34" height="24" rx="3" fill="#f1f1f1" />
          <path d="M2 2l16 13L34 2M2 24l11-12M34 24L23 12" stroke="#9a9a9a" strokeWidth="1.500" fill="none" />
        </svg>
      </Tile>
    ),
  },
  {
    name: "Calendar",
    badge: "4",
    art: (
      <Tile className="flex-col bg-[#f6f6f6]">
        <span className="w-full bg-[#f0453c] pl-[11px] text-[10px] leading-[15px] text-white">FEB</span>
        <span className="flex-1 text-[27px] leading-8 text-[#222222]">21</span>
      </Tile>
    ),
  },
  {
    name: "Notes",
    art: (
      <Tile className="flex-col bg-[#f3f2ee]">
        <i className="h-[13px] w-full bg-[#fdc60a]" />
        <i className="mt-[9px] h-[2px] w-full bg-[#d6d6d2]" />
        <i className="mt-[10px] h-[2px] w-full bg-[#d6d6d2]" />
        <i className="flex-1" />
      </Tile>
    ),
  },
  {
    name: "Freeform",
    art: (
      <Tile className="bg-white">
        <svg width="44" height="44" aria-hidden="true">
          <rect x="16" y="4" width="24" height="22" rx="4" fill="#43c6f5" />
          <circle cx="17" cy="31" r="11" fill="#fb6a5e" />
          <path d="M5 32c4 0 8-16 11-16s-2 14 1 14 6-14 9-13-2 12 1 12 5-7 7-7 2 2 5 2" stroke="#1d4f7c" strokeWidth="3" fill="none" strokeLinecap="round" />
        </svg>
      </Tile>
    ),
  },
  {
    name: "Pages",
    art: (
      <Tile className="bg-[linear-gradient(#fdb03a,#fa8a14)]">
        <svg width="44" height="44" aria-hidden="true">
          <path d="M33 3c3 1 4 4 3 6L18 34l-8 6 3-10z" fill="#fff" />
          <path d="M13 30l5 4-8 6z" fill="#d8dade" />
          <path d="M10 41h28" stroke="#ffe3b8" strokeWidth="2" />
        </svg>
      </Tile>
    ),
  },
  {
    name: "App Store",
    art: (
      <Tile className="bg-[linear-gradient(#22a6fb,#1a6cf0)]">
        <svg width="38" height="36" fill="none" stroke="#fff" strokeWidth="4" strokeLinecap="round" aria-hidden="true">
          <path d="M21 4L9 26M17 4l12 22M3 25h19M28 25h7M7 31l-1.500 2.500M31 30l2 3.500" />
        </svg>
      </Tile>
    ),
  },
  { name: "System Settings", dot: true, art: <Tile className="bg-[#b9bfc4]"><GearArt /></Tile> },
  { name: "IntelliJ IDEA", dot: true, art: <IdeaArt /> },
];
const recents: typeof apps = [
  { name: "Zoom", art: <Tile className="bg-[#0b50e6] text-[14px] font-semibold text-white">zoom</Tile> },
  { name: "Preview", dot: true, art: <PreviewArt /> },
  { name: "Slack", dot: true, badge: "•", art: <Tile className="bg-white"><SlackArt /></Tile> },
];

function DockApp({ app }: { app: (typeof apps)[number] }) {
  return (
    <button aria-label={app.name} className="relative flex h-full flex-1 items-center justify-center pb-1">
      {app.art}
      {app.badge && (
        <span className="absolute right-0 top-[5px] flex size-[23px] items-center justify-center rounded-full bg-[#f53d35] text-[14px] text-white">{app.badge}</span>
      )}
      {app.dot && <i className="absolute bottom-1 size-[6px] rounded-full bg-[#b9aec4]" />}
    </button>
  );
}

type Kind = "light" | "term" | "slack" | "idea" | "settings" | "sublime" | "figma" | "figmaBox" | "notes" | "discord" | "chrome";
const windows: Kind[] = [
  "light", "term", "slack", "idea", "idea", "idea", "settings", "idea", "sublime", "figma", "figma", "figma", "figma",
  "figma", "figma", "figmaBox", "notes", "discord", "figmaBox", "figmaBox", "chrome",
];
const look: Record<Kind, { h: number; bg: string; ink: string }> = {
  light: { h: 38, bg: "#f3f0f2", ink: "#c5bcc4" },
  term: { h: 39, bg: "#1b1d1e", ink: "#646a6a" },
  slack: { h: 32, bg: "#1d2128", ink: "#2f3744" },
  idea: { h: 31, bg: "#111114", ink: "#2b3548" },
  settings: { h: 48, bg: "#3a3b3e", ink: "#4c4d52" },
  sublime: { h: 44, bg: "#2c3b44", ink: "#3d534f" },
  figma: { h: 38, bg: "#1f1f20", ink: "#3a3a3c" },
  figmaBox: { h: 38, bg: "#1f1f20", ink: "#3a3a3c" },
  notes: { h: 43, bg: "#f7f7fa", ink: "#c8c8dc" },
  discord: { h: 31, bg: "#2a2a2c", ink: "#4a463a" },
  chrome: { h: 31, bg: "#1e1f22", ink: "#4c4e52" },
};

function Corner({ kind }: { kind: Kind }) {
  if (kind === "term") return null;
  const small = "flex size-5 items-center justify-center rounded-[4px]";
  return (
    <span className="absolute bottom-[14px] right-[3px]">
      {kind === "slack" && <span className={`${small} bg-white`}><SlackArt s={15} /></span>}
      {kind === "idea" && <IdeaArt small />}
      {kind === "settings" && <span className={`${small} bg-[#b9bfc4]`}><GearArt s={18} /></span>}
      {kind === "sublime" && <span className={`${small} bg-[#3c3c3c]`}><SublimeArt s={15} /></span>}
      {kind === "notes" && <span className={`${small} bg-[#1678e0]`}><SlashArt s={15} /></span>}
      {kind === "discord" && <span className={`${small} bg-[#5f6ff0]`}><FaDiscord className="size-4 text-white" /></span>}
      {kind === "chrome" && <span className={`${small} bg-white`}><ChromeArt s={18} /></span>}
      {(kind === "light" || kind === "figma" || kind === "figmaBox") && <PreviewArt s={20} />}
    </span>
  );
}

function MiniWindow({ kind, n }: { kind: Kind; n: number }) {
  const { h, bg, ink } = look[kind];
  const isFigma = kind === "figma" || kind === "figmaBox";
  const rows = Math.floor((h - 8) / 4);
  return (
    <button aria-label={`Window ${n + 1}`} className="relative flex h-full flex-1 items-center justify-center pb-1">
      <svg width="56" height={h} aria-hidden="true">
        <rect width="56" height={h} fill={bg} stroke={kind === "term" ? "#b8b8b8" : "none"} strokeWidth="2" />
        {!isFigma &&
          Array.from({ length: rows }, (_, i) => (
            <path
              key={i}
              d={`M${4 + ((i * 3 + n) % 4) * 2} ${6 + i * 4}h${12 + ((i * 7 + n * 5) % 20)}`}
              stroke={ink}
              strokeWidth="2"
              strokeDasharray="4 1 7 2"
            />
          ))}
        {isFigma && (
          <>
            <path d="M0 1h56" stroke="#6a2ac8" strokeWidth="2" />
            <path d="M0 4h56" stroke="#3a3b3f" strokeWidth="4" />
            <path d="M0 6h10v28H0zM47 6h9v28h-9z" fill="#2d2d2e" />
            <path d={`M${22 + (n % 3) * 5} 12h12v18h-12z`} fill="#2d2f31" />
            <path d={`M${24 + (n % 3) * 5} 15h3M${24 + (n % 3) * 5} 21h7M${24 + (n % 3) * 5} 26h5`} stroke="#46627c" />
            <path d={`M0 ${h - 1}h56`} stroke="#7a3b9c" strokeWidth="2" strokeDasharray="3 1" />
          </>
        )}
        {kind === "figmaBox" && <path d="M13 12h14v13H13z" fill="#dcdedd" />}
        {kind === "idea" && <path d="M0 1h56M20 19h34" stroke="#54208c" strokeWidth="2" />}
        {kind === "light" && (
          <>
            <path d="M0 1h56" stroke="#238c86" strokeWidth="2" />
            <path d="M0 4h56" stroke="#3a3b3f" strokeWidth="4" />
            <path d="M3 8h10v7H3z" fill="#c2562e" />
          </>
        )}
        {kind === "settings" && <path d="M34 7h5M40 7h5M46 7h5" stroke="#e09a3c" strokeWidth="4" />}
        {kind === "notes" && (
          <>
            <path d="M36 0h20v43H36z" fill="#23242a" />
            <path d="M4 14h12v6H4z" fill="#4a55e8" />
            <path d="M36 6h18" stroke="#3a4ad0" strokeWidth="2" />
          </>
        )}
        {kind === "discord" && <path d="M20 18h10v8H20z" fill="#dcdedd" />}
      </svg>
      <Corner kind={kind} />
    </button>
  );
}

const Divider = () => (
  <span className="flex h-full w-7 items-center justify-center">
    <i className="h-[58px] w-px bg-[#86768f]" />
  </span>
);

function Dock() {
  return (
    <footer className="relative z-10 flex h-[120px] items-end px-[47px] pb-[10px]">
      <div className="flex h-[82px] w-full items-center rounded-[24px] border-2 border-white/20 bg-[linear-gradient(90deg,#4a2340_0%,#1f1230_5%,#291257_14%,#171322_20%,#1c1338_27%,#221358_31%,#16131f_38%,#241529_44%,#5c2f50_49%,#6a2b78_53%,#4a2359_64%,#3e1c58_80%,#26134a_94%,#2a1250_100%)] px-[3px]">
        {apps.map((a) => (
          <DockApp key={a.name} app={a} />
        ))}
        <Divider />
        {recents.map((a) => (
          <DockApp key={a.name} app={a} />
        ))}
        <Divider />
        {windows.map((k, i) => (
          <MiniWindow key={i} kind={k} n={i} />
        ))}
        <button aria-label="Trash" className="flex h-full flex-1 items-center justify-center pb-1">
          <svg width="46" height="56" viewBox="0 0 46 56" aria-hidden="true">
            <path d="M3 13h40l-5 38c-4 5-26 5-30 0z" fill="#77777e" />
            <path d="M20 13h10l-1 41h-8z" fill="#97979e" />
            <ellipse cx="23" cy="13" rx="20" ry="5" fill="#5f5f66" />
            <path d="M6 13l6-10 6 6 6-8 7 7 5-5 5 11c-10 4-26 4-35-1z" fill="#e9e9ee" />
            <path d="M13 8l4 5M28 6l3 6" stroke="#4a7fd0" strokeWidth="2" />
          </svg>
        </button>
      </div>
    </footer>
  );
}

export default function App() {
  return (
    <div className="relative flex min-h-screen flex-col overflow-hidden bg-[#4d03c5] font-[Inter,sans-serif]">
      <Wallpaper />
      <MenuBar />
      <div className="relative mt-[2px] flex flex-1 flex-col overflow-hidden rounded-[20px] border-2 border-[#5a5a5e] bg-[#2c2c2c] outline outline-black">
        <TabStrip />
        <AddressBar />
        <FigmaToolbar />
        <div className="flex flex-1">
          <LayersPanel />
          <Canvas />
          <DesignPanel />
        </div>
      </div>
      <Dock />
    </div>
  );
}
